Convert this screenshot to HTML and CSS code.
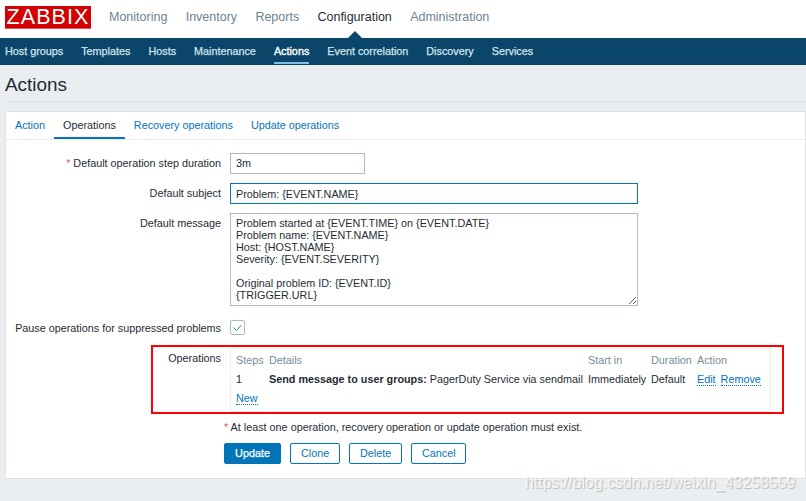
FILE: index.html
```html
<!DOCTYPE html>
<html lang="en">
<head>
<meta charset="utf-8">
<title>Actions</title>
<link rel="stylesheet" href="styles.css">
</head>
<body>
<header class="top">
  <a class="logo">ZABBIX</a>
  <nav class="main-nav">
    <a>Monitoring</a>
    <a>Inventory</a>
    <a>Reports</a>
    <a class="current">Configuration</a>
    <a>Administration</a>
  </nav>
</header>
<nav class="sub-nav">
  <a>Host groups</a>
  <a>Templates</a>
  <a>Hosts</a>
  <a>Maintenance</a>
  <a class="current">Actions</a>
  <a>Event correlation</a>
  <a>Discovery</a>
  <a>Services</a>
</nav>
<main class="page">
  <h1 class="title">Actions</h1>
  <section class="card">
    <div class="tabs">
      <a>Action</a>
      <a class="current">Operations</a>
      <a>Recovery operations</a>
      <a>Update operations</a>
    </div>
    <form class="form">
      <label class="lbl"><span class="req">*</span> Default operation step duration</label>
      <input class="field short" type="text" value="3m">
      <label class="lbl">Default subject</label>
      <input class="field wide focus" type="text" value="Problem: {EVENT.NAME}">
      <label class="lbl">Default message</label>
      <textarea class="field wide area" spellcheck="false">Problem started at {EVENT.TIME} on {EVENT.DATE}
Problem name: {EVENT.NAME}
Host: {HOST.NAME}
Severity: {EVENT.SEVERITY}

Original problem ID: {EVENT.ID}
{TRIGGER.URL}</textarea>
      <label class="lbl check-lbl">Pause operations for suppressed problems</label>
      <span class="check">
        <svg width="15" height="15" viewBox="0 0 15 15"><path d="M3.5 7.5 L6.5 10.5 L11.5 5" fill="none" stroke="#2a86c0" stroke-width="1"/></svg>
      </span>
      <label class="lbl ops-lbl">Operations</label>
      <div class="ops">
        <table class="ops-table">
          <thead>
            <tr><th class="c-steps">Steps</th><th class="c-details">Details</th><th class="c-start">Start in</th><th class="c-dur">Duration</th><th class="c-act">Action</th></tr>
          </thead>
          <tbody>
            <tr>
              <td>1</td>
              <td><b>Send message to user groups:</b> PagerDuty Service via sendmail</td>
              <td>Immediately</td>
              <td>Default</td>
              <td class="acts"><a class="dot">Edit</a><a class="dot">Remove</a></td>
            </tr>
          </tbody>
        </table>
        <a class="dot new">New</a>
      </div>
      <div class="foot">
        <p class="note"><span class="req">*</span> At least one operation, recovery operation or update operation must exist.</p>
        <div class="btns">
          <button class="btn primary" type="button">Update</button>
          <button class="btn" type="button">Clone</button>
          <button class="btn" type="button">Delete</button>
          <button class="btn" type="button">Cancel</button>
        </div>
      </div>
      <div class="mark"></div>
    </form>
  </section>
</main>
<div class="watermark">https://blog.csdn.net/weixin_43258559</div>
</body>
</html>
```
FILE: styles.css
```css
* { box-sizing: border-box; }
html, body { margin: 0; height: 501px; overflow: hidden; }
body {
  position: relative;
  background: #ebeef0;
  color: #1f2c33;
  font-family: "Liberation Sans", Arial, sans-serif;
  font-size: 10.8px;
  line-height: 12px;
}
.top {
  height: 38px;
  background: #fff;
  display: flex;
  align-items: flex-start;
  padding-left: 5px;
}
.logo {
  margin-top: 6px;
  width: 86px;
  height: 23px;
  background: #d40000;
  border-bottom: 1px solid #e8585a;
  color: #fff;
  font-size: 21.5px;
  line-height: 22px;
  letter-spacing: 1.1px;
  text-align: center;
}
.main-nav {
  display: flex;
  gap: 18.3px;
  margin-left: 18px;
  padding-top: 10px;
  font-size: 12.5px;
  line-height: 15px;
  color: #6c838f;
}
.main-nav .current {
  color: #1f2c33;
  position: relative;
}
.main-nav .current::after {
  content: "";
  position: absolute;
  left: 50%;
  bottom: -13px;
  margin-left: -7px;
  border: 7px solid transparent;
  border-top: 0;
  border-bottom-color: #0a466a;
}
.sub-nav {
  height: 27px;
  background: #0a466a;
  display: flex;
  gap: 18px;
  padding-left: 5px;
  color: #d5e3ea;
  font-weight: normal;
  -webkit-text-stroke: 0.25px #d5e3ea;
}
.sub-nav a {
  height: 26px;
  padding-top: 7px;
}
.sub-nav .current {
  color: #fff;
  -webkit-text-stroke: 0.35px #fff;
  border-bottom: 2px solid #7cc0e8;
}
.page { padding: 0 0 0 5px; }
.title {
  margin: 0;
  height: 37px;
  padding-top: 9px;
  font-size: 18.9px;
  line-height: 22px;
  font-weight: normal;
  border-bottom: 1px solid #dfe4e7;
}
.card {
  margin-top: 9px;
  height: 368px;
  background: #fff;
  border: 1px solid #dfe4e7;
}
.tabs {
  display: flex;
  height: 28px;
  padding-left: 0;
  border-bottom: 1px solid #ebeef0;
  color: #0275b8;
}
.tabs a {
  height: 27px;
  padding: 7px 9px 0;
}
.tabs .current {
  color: #1f2c33;
  border-bottom: 2px solid #0275b8;
}
.form {
  position: relative;
  display: grid;
  grid-template-columns: 215px 1fr;
  column-gap: 9px;
  padding-top: 13px;
  margin: 0;
}
.lbl {
  text-align: right;
  padding-top: 4px;
}
.req { color: #e45959; }
.field {
  display: block;
  margin: 0;
  border: 1px solid #acbbc2;
  background: #fff;
  color: #1f2c33;
  font-family: "Liberation Sans", Arial, sans-serif;
  font-size: 10.8px;
  line-height: 12px;
  padding: 0 5px;
  outline: 0;
  border-radius: 0;
}
.short { width: 135px; height: 21px; margin-bottom: 9px; padding-bottom: 1px; }
.wide { width: 408px; }
.focus { height: 21px; margin-bottom: 9px; border-color: #0275b8; }
.area {
  height: 93px;
  padding: 3px 5px;
  margin-bottom: 14px;
  overflow: hidden;
  resize: both;
}
.check-lbl { padding-top: 2px; }
.check {
  display: block;
  width: 15px;
  height: 15px;
  border: 1px solid #acbbc2;
  border-radius: 2px;
  margin-bottom: 13px;
  overflow: hidden;
}
.check svg { display: block; margin: -1px; }
.ops-lbl { padding-top: 4px; }
.ops {
  width: 541px;
  height: 64px;
  border: 1px solid #ebeef0;
  padding: 3px 5px 0;
}
.ops-table {
  border-collapse: collapse;
  table-layout: fixed;
  width: 530px;
}
.ops-table th {
  text-align: left;
  font-weight: normal;
  color: #768d99;
  height: 16px;
  padding: 0;
}
.ops-table td { height: 22px; padding: 0; white-space: nowrap; }
.c-steps { width: 33px; }
.c-details { width: 319px; }
.c-start { width: 63px; }
.c-dur { width: 46px; }
.c-act { width: 69px; }
.dot {
  color: #0275b8;
  border-bottom: 1px dotted #0275b8;
}
.acts .dot + .dot { margin-left: 5px; }
.new { display: inline-block; margin-top: 2px; }
.foot {
  grid-column: 2;
  margin-left: -6px;
  padding-top: 9px;
}
.note { margin: 0; height: 22px; }
.btns { display: flex; gap: 9px; }
.btn {
  height: 21px;
  padding: 0 10px 1px;
  background: #fff;
  border: 1px solid #0275b8;
  border-radius: 2px;
  color: #0275b8;
  font-family: "Liberation Sans", Arial, sans-serif;
  font-size: 10.8px;
  margin: 0;
}
.btn:nth-child(2) { width: 50px; }
.btn:nth-child(3) { width: 53px; }
.btn:nth-child(4) { width: 55px; }
.primary {
  width: 57px;
  background: #0275b8;
  color: #fff;
  -webkit-text-stroke: 0.25px #fff;
}
.mark {
  position: absolute;
  left: 145px;
  top: 205px;
  width: 633px;
  height: 69px;
  border: 2px solid #ff0000;
  pointer-events: none;
}
.watermark {
  position: absolute;
  left: 525px;
  top: 474px;
  font-size: 15.9px;
  line-height: 18px;
  color: rgba(255,255,255,0.75);
  text-shadow: 1px 1px 1px rgba(120,120,120,0.45);
  white-space: nowrap;
}
```
